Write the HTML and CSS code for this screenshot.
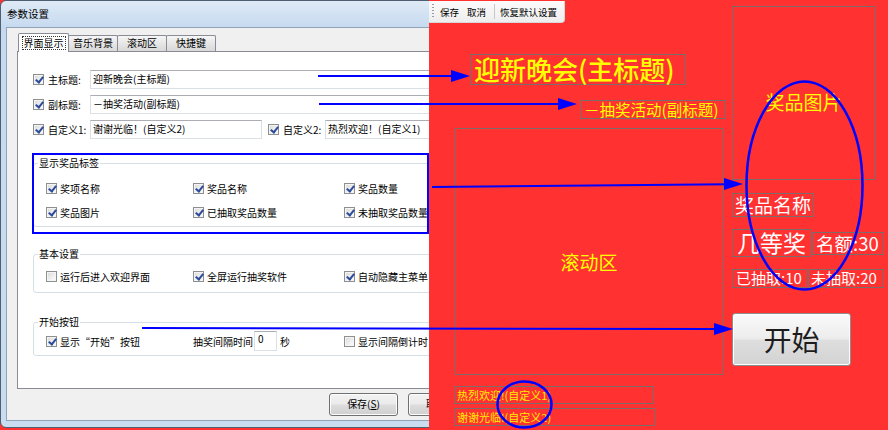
FILE: index.html
```html
<!DOCTYPE html>
<html lang="zh-CN">
<head>
<meta charset="utf-8">
<title>参数设置</title>
<link rel="stylesheet" href="styles.css">
</head>
<body>
<div class="screen">
  <div class="dialog-clip">
    <div class="dialog">
      <div class="titlebar">参数设置</div>
      <div class="client">
        <div class="tabs">
          <div class="tab active"><span class="focus">界面显示</span></div>
          <div class="tab">音乐背景</div>
          <div class="tab">滚动区</div>
          <div class="tab">快捷键</div>
        </div>
        <div class="page">
          <div class="field-row first">
            <span class="cb on"></span><span class="flabel">主标题:</span>
            <div class="input wide">迎新晚会(主标题)</div>
          </div>
          <div class="field-row">
            <span class="cb on"></span><span class="flabel">副标题:</span>
            <div class="input wide">－抽奖活动(副标题)</div>
          </div>
          <div class="field-row">
            <span class="cb on"></span><span class="flabel">自定义1:</span>
            <div class="input short">谢谢光临！(自定义2)</div>
            <span class="cb on"></span><span class="flabel">自定义2:</span>
            <div class="input wide">热烈欢迎！(自定义1)</div>
          </div>

          <fieldset class="group g1">
            <legend>显示奖品标签</legend>
            <div class="opts">
              <label class="opt"><span class="cb on"></span>奖项名称</label>
              <label class="opt"><span class="cb on"></span>奖品名称</label>
              <label class="opt"><span class="cb on"></span>奖品数量</label>
              <label class="opt"><span class="cb on"></span>奖品图片</label>
              <label class="opt"><span class="cb on"></span>已抽取奖品数量</label>
              <label class="opt"><span class="cb on"></span>未抽取奖品数量</label>
            </div>
          </fieldset>

          <fieldset class="group g2">
            <legend>基本设置</legend>
            <div class="opts">
              <label class="opt"><span class="cb"></span>运行后进入欢迎界面</label>
              <label class="opt"><span class="cb on"></span>全屏运行抽奖软件</label>
              <label class="opt"><span class="cb on"></span>自动隐藏主菜单</label>
            </div>
          </fieldset>

          <fieldset class="group g3">
            <legend>开始按钮</legend>
            <div class="opts tall">
              <label class="opt"><span class="cb on"></span>显示“开始”按钮</label>
              <div class="opt">抽奖间隔时间<div class="input num">0</div><span class="unit">秒</span></div>
              <label class="opt"><span class="cb"></span>显示间隔倒计时</label>
            </div>
          </fieldset>
        </div>
        <div class="buttons">
          <div class="btn">保存(<u>S</u>)</div>
          <div class="btn">取消(<u>C</u>)</div>
        </div>
      </div>
    </div>
  </div>

  <div class="stage">
    <div class="toolbar">
      <span class="grip"></span>
      <span class="tb-btn">保存</span>
      <span class="tb-btn">取消</span>
      <span class="tb-sep"></span>
      <span class="tb-btn">恢复默认设置</span>
    </div>
    <div class="item yellow main-title">迎新晚会(主标题)</div>
    <div class="item yellow sub-title">－抽奖活动(副标题)</div>
    <div class="item yellow scroll-area">滚动区</div>
    <div class="item yellow prize-img">奖品图片</div>
    <div class="item white prize-name">奖品名称</div>
    <div class="item white prize-level">几等奖</div>
    <div class="item white quota">名额:30</div>
    <div class="item white drawn">已抽取:10</div>
    <div class="item white undrawn">未抽取:20</div>
    <div class="item start-btn">开始</div>
    <div class="item custom c1">热烈欢迎!(自定义1)</div>
    <div class="item custom c2">谢谢光临!(自定义2)</div>
  </div>

  <svg class="annot" width="888" height="430" viewBox="0 0 888 430">
    <g fill="#0000ff" stroke="none">
      <polygon points="451,70 470,76 451,82"/>
      <polygon points="558,98 577,104 558,110"/>
      <polygon points="724,178 743,184 724,190"/>
      <polygon points="714,323 733,329 714,335"/>
    </g>
    <g stroke="#0000ff" stroke-width="2" fill="none">
      <line x1="318" y1="76" x2="455" y2="76"/>
      <line x1="319" y1="104" x2="562" y2="104"/>
      <line x1="432" y1="187" x2="728" y2="184.3"/>
      <line x1="142" y1="328" x2="718" y2="329"/>
      <rect x="33" y="154" width="395" height="79"/>
    </g>
    <g stroke="#0000ff" stroke-width="2.5" fill="none">
      <ellipse cx="804.5" cy="185.5" rx="58" ry="104"/>
      <ellipse cx="524.5" cy="404.5" rx="27" ry="23"/>
    </g>
  </svg>
</div>
</body>
</html>
```

FILE: styles.css
```css
* { box-sizing: border-box; }

html, body {
  margin: 0;
  padding: 0;
}

body {
  width: 888px;
  height: 430px;
  overflow: hidden;
  background: #ff3131;
  font-family: "Noto Sans CJK SC", "Noto Sans", sans-serif;
  color: #000;
}

.screen {
  position: relative;
  width: 888px;
  height: 430px;
  display: flex;
}

/* ---------- Dialog ---------- */
.dialog-clip {
  flex: none;
  width: 429px;
  height: 430px;
  overflow: hidden;
}

.dialog {
  width: 520px;
  height: 428px;
  background: linear-gradient(#dfeaf6, #c6daef 26px, #c9dcf0);
  border: 1px solid #4f5e70;
  border-radius: 6px 6px 0 6px;
  display: flex;
  flex-direction: column;
}

.titlebar {
  flex: none;
  height: 26px;
  line-height: 25px;
  padding-left: 6px;
  font-size: 10.5px;
  color: #000;
}

.client {
  flex: none;
  height: 394px;
  margin-left: 5px;
  margin-right: 5px;
  background: #f0f0f0;
  border: 1px solid #8fa3bb;
  display: flex;
  flex-direction: column;
  font-size: 10px;
}

.tabs {
  display: flex;
  align-items: flex-end;
  margin-top: 5px;
  margin-left: 11px;
  height: 18px;
}

.tab {
  height: 16px;
  width: 50px;
  margin-right: -1px;
  border: 1px solid #898c95;
  border-bottom: none;
  border-radius: 2px 2px 0 0;
  background: linear-gradient(#f6f6f6, #e6e6e6 50%, #d8d8d8);
  font-size: 10px;
  line-height: 14px;
  text-align: center;
}

.tab.active {
  position: relative;
  z-index: 2;
  height: 19px;
  width: 51px;
  margin-bottom: -1px;
  background: #fff;
  line-height: 17px;
}

.focus {
  display: inline-block;
  border: 1px dotted #333;
  line-height: 12px;
  padding: 0 1px;
}

.page {
  flex: none;
  margin-left: 10px;
  width: 490px;
  height: 338px;
  background: #fff;
  border: 1px solid #898c95;
}

.field-row {
  display: flex;
  align-items: center;
  height: 19px;
  margin-top: 6px;
  margin-left: 15px;
  white-space: nowrap;
}

.field-row.first {
  margin-top: 18px;
}

.cb {
  flex: none;
  position: relative;
  width: 11px;
  height: 11px;
  border: 1px solid #8e8f8f;
  background: linear-gradient(135deg, #d8d8d8, #f4f4f4 70%, #ffffff);
  box-shadow: inset 0 0 0 1px #f4f4f4;
}

.cb.on::after {
  content: "";
  position: absolute;
  left: 3px;
  top: 0px;
  width: 3px;
  height: 6px;
  border: solid #2c4b9b;
  border-width: 0 2px 2px 0;
  transform: rotate(38deg);
}

.field-row .cb {
  margin-right: 4px;
}

.flabel {
  flex: none;
  width: 42px;
  line-height: 19px;
  white-space: nowrap;
}

.input {
  flex: none;
  height: 19px;
  border: 1px solid #dbdfe6;
  border-top-color: #abadb3;
  background: #fff;
  padding-left: 2px;
  line-height: 16px;
  white-space: nowrap;
}

.input.wide {
  width: 400px;
}

.input.short {
  width: 172px;
  margin-right: 6px;
}

.input.num {
  width: 23px;
  height: 20px;
  margin-left: 1px;
  padding-left: 3px;
  line-height: 13px;
}

.unit {
  margin-left: 3px;
}

.group {
  margin: 0 0 0 15px;
  padding: 0 0 6px 0;
  border: 1px solid #d5dfe5;
  border-radius: 3px;
  min-inline-size: 0;
  width: 460px;
}

.group legend {
  margin-left: 4px;
  padding: 0 1px;
  font-size: 10px;
  line-height: 16px;
}

.g1 { margin-top: 16px; }
.g2 { margin-top: 19px; padding-bottom: 8px; }
.g3 { margin-top: 21px; padding-bottom: 4px; }

.opts {
  display: grid;
  grid-template-columns: 147px 151px 150px;
  grid-auto-rows: 16px;
  row-gap: 8px;
  padding-left: 12px;
}

.g1 .opts { padding-top: 9px; }
.g2 .opts { padding-top: 6px; }
.g3 .opts { padding-top: 1px; grid-auto-rows: 20px; }

.opt {
  display: flex;
  align-items: center;
  white-space: nowrap;
  font-size: 10px;
}

.opt .cb {
  margin-right: 3px;
}

.buttons {
  display: flex;
  margin-top: 4px;
  padding-left: 322px;
}

.btn {
  flex: none;
  width: 69px;
  height: 23px;
  margin-right: 10px;
  border: 1px solid #707070;
  border-radius: 3px;
  background: linear-gradient(#f2f2f2, #ebebeb 48%, #dddddd 52%, #cfcfcf);
  box-shadow: inset 0 0 0 1px #fcfcfc;
  text-align: center;
  line-height: 20px;
  font-size: 10px;
}

/* ---------- Red design canvas ---------- */
.stage {
  flex: 1;
  position: relative;
  height: 430px;
}

.toolbar {
  display: inline-flex;
  align-items: center;
  height: 22px;
  padding: 0 7px 0 3px;
  background: linear-gradient(#fbfbfb, #eeeeee);
  border-right: 1px solid #d8d8d8;
  border-bottom: 1px solid #d8d8d8;
  border-radius: 0 0 4px 0;
  font-size: 9.5px;
}

.grip {
  width: 2px;
  height: 15px;
  margin-right: 6px;
  background: repeating-linear-gradient(#9a9a9a 0 1px, transparent 1px 3px);
}

.tb-btn {
  margin-right: 8px;
  line-height: 14px;
}

.tb-btn:last-child {
  margin-right: 0;
}

.tb-sep {
  width: 1px;
  height: 15px;
  background: #c8c8c8;
  margin: 0 5px 0 0;
}

.item {
  position: absolute;
  display: flex;
  align-items: center;
  border: 1px solid #7c6c6c;
  white-space: nowrap;
  line-height: 1.1;
}

.yellow { color: #ffff00; }
.white { color: #ffffff; }

.main-title {
  left: 41px; top: 54px; width: 216px; height: 31px;
  padding-left: 3px;
  font-size: 26px;
  font-weight: 500;
}

.sub-title {
  left: 151px; top: 100px; width: 146px; height: 19px;
  padding-left: 3px;
  font-size: 15.5px;
}

.scroll-area {
  left: 26px; top: 128px; width: 268px; height: 247px;
  justify-content: center;
  padding-top: 22px;
  font-size: 19px;
}

.prize-img {
  left: 303px; top: 6px; width: 143px; height: 174px;
  justify-content: center;
  padding-top: 18px;
  font-size: 19px;
}

.prize-name {
  left: 303px; top: 193px; width: 82px; height: 24px;
  padding-left: 2px;
  font-size: 19px;
}

.prize-level {
  left: 303px; top: 229px; width: 79px; height: 28px;
  padding-left: 4px;
  font-size: 23px;
}

.quota {
  left: 383px; top: 232px; width: 72px; height: 23px;
  padding-left: 3px;
  font-size: 18.5px;
}

.drawn {
  left: 303px; top: 269px; width: 75px; height: 19px;
  padding-left: 3px;
  font-size: 15px;
}

.undrawn {
  left: 379px; top: 269px; width: 76px; height: 19px;
  padding-left: 2px;
  font-size: 15px;
}

.start-btn {
  left: 303px; top: 313px; width: 119px; height: 53px;
  justify-content: center;
  border: 1px solid #8c8c8c;
  border-radius: 3px;
  background: linear-gradient(#fafafa, #ececec 48%, #dedede 52%, #d2d2d2);
  box-shadow: inset 0 0 0 1px #ffffff;
  color: #1c1c1c;
  font-size: 28px;
}

.custom {
  left: 25px;
  height: 18px;
  padding-left: 2px;
  color: #ffee00;
  font-size: 11px;
  line-height: 15px;
}

.c1 { top: 386px; width: 200px; }
.c2 { top: 408px; width: 201px; }

/* ---------- Annotations ---------- */
.annot {
  position: absolute;
  left: 0;
  top: 0;
  pointer-events: none;
}
```
